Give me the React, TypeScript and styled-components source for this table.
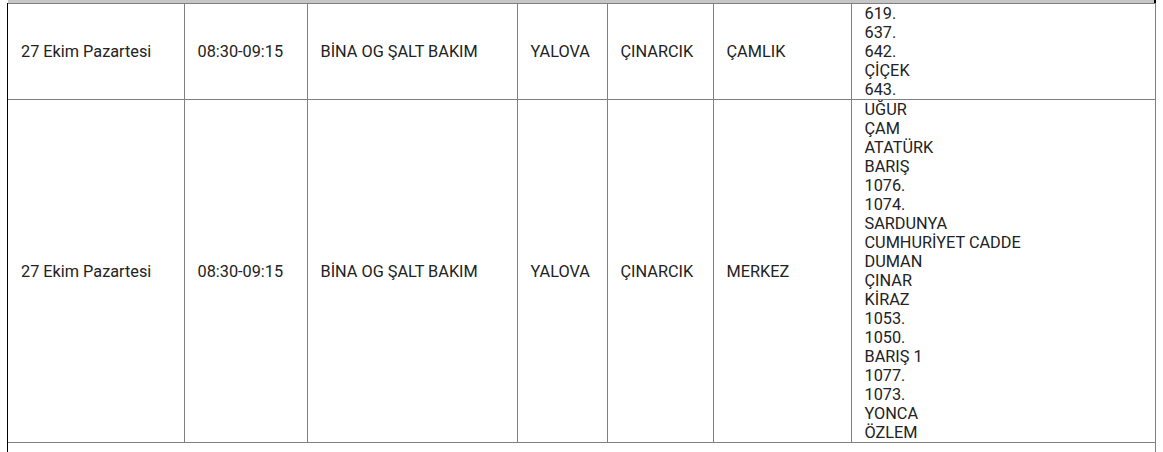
import React from 'react'
import styled, { createGlobalStyle } from 'styled-components'

type Outage = {
  date: string
  time: string
  work: string
  city: string
  district: string
  quarter: string
  streets: string[]
}

const rows: Outage[] = [
  {
    date: '27 Ekim Pazartesi',
    time: '08:30-09:15',
    work: 'BİNA OG ŞALT BAKIM',
    city: 'YALOVA',
    district: 'ÇINARCIK',
    quarter: 'ÇAMLIK',
    streets: ['619.', '637.', '642.', 'ÇİÇEK', '643.'],
  },
  {
    date: '27 Ekim Pazartesi',
    time: '08:30-09:15',
    work: 'BİNA OG ŞALT BAKIM',
    city: 'YALOVA',
    district: 'ÇINARCIK',
    quarter: 'MERKEZ',
    streets: [
      'UĞUR', 'ÇAM', 'ATATÜRK', 'BARIŞ', '1076.', '1074.', 'SARDUNYA',
      'CUMHURİYET CADDE', 'DUMAN', 'ÇINAR', 'KİRAZ', '1053.', '1050.',
      'BARIŞ 1', '1077.', '1073.', 'YONCA', 'ÖZLEM',
    ],
  },
]

const colWidths = [176, 123, 210, 90, 106, 138, 304]

function App() {
  return (
    <>
      <GlobalStyle />
      <StPage>
        <StTopStrip />
        <StFrame>
          <StTable>
            <colgroup>
              {colWidths.map((w, i) => (
                <col key={i} style={{ width: w }} />
              ))}
            </colgroup>
            <tbody>
              {rows.map((r, i) => (
                <StRow key={i}>
                  <StCell>{r.date}</StCell>
                  <StCell>{r.time}</StCell>
                  <StCell>{r.work}</StCell>
                  <StCell>{r.city}</StCell>
                  <StCell>{r.district}</StCell>
                  <StCell>{r.quarter}</StCell>
                  <StCell>
                    {r.streets.map((s, j) => (
                      <StStreet key={j}>{s}</StStreet>
                    ))}
                  </StCell>
                </StRow>
              ))}
              <StRow>
                <StCell colSpan={7} $empty />
              </StRow>
            </tbody>
          </StTable>
        </StFrame>
      </StPage>
    </>
  )
}

const GlobalStyle = createGlobalStyle`
  html, body {
    margin: 0;
    padding: 0;
    background: #fff;
    overflow: hidden;
  }
  body {
    font-family: Roboto, "Liberation Sans", Arial, sans-serif;
    color: #222;
  }
`

const StPage = styled.div`
  width: 1163px;
  height: 452px;
  overflow: hidden;
`

const StTopStrip = styled.div`
  margin-left: 8px;
  width: 1146px;
  height: 3px;
  background-color: #c6c6c6;
  border-right: 2px solid #000;
`

const StFrame = styled.div`
  margin-left: 7px;
  width: 1148px;
  border-left: 1px solid #000;
`

const StTable = styled.table`
  width: 1147px;
  table-layout: fixed;
  border-collapse: collapse;
  border-spacing: 0;
`

const StRow = styled.tr`
  &:first-child td {
    border-top: 1px solid #808080;
  }
  & td:first-child {
    border-left: none;
  }
`

const StCell = styled.td<{ $empty?: boolean }>`
  padding: 0 13px;
  border: 1px solid #808080;
  border-left: none;
  vertical-align: middle;
  font-size: 16.3px;
  line-height: 19px;
  white-space: nowrap;
  height: ${(p) => (p.$empty ? '40px' : 'auto')};
`

const StStreet = styled.div`
  line-height: 19px;
`

export default App
